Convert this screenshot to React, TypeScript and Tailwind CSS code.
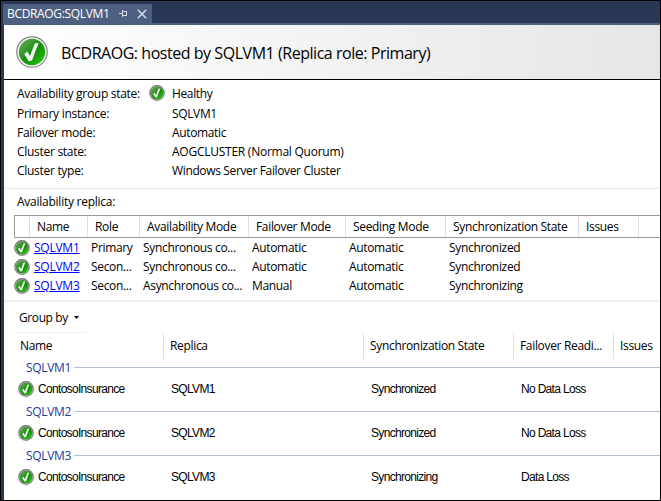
import { clsx } from "clsx";

function Check({ size = 16 }: { size?: number }) {
  const large = size > 20;
  return (
    <svg width={size} height={size} viewBox="0 0 32 32" className="shrink-0">
      <defs>
        <linearGradient id="ring" x1="0" y1="0" x2="0" y2="1">
          <stop offset="0" stopColor="#6c6c6c" />
          <stop offset="1" stopColor="#8c8c8c" />
        </linearGradient>
        <linearGradient id="green" x1="0" y1="0" x2="1" y2="1">
          <stop offset="0" stopColor="#6fb55c" />
          <stop offset="0.35" stopColor="#35972a" />
          <stop offset="0.55" stopColor="#149004" />
          <stop offset="1" stopColor="#2bcf14" />
        </linearGradient>
      </defs>
      <circle cx="16" cy="16" r="15.8" fill="url(#ring)" />
      <circle cx="16" cy="16" r={large ? 14.7 : 13.6} fill={large ? "#f0f0f0" : "#b4b4b4"} />
      <circle cx="16" cy="16" r={large ? 13.2 : 12.6} fill="url(#green)" />
      <path d="M8.3 18 L11.2 15.4 L14 20 L18.8 7.6 L22.6 7 L16 24.6 L12.6 25.2 Z" fill="#f7f7f7" />
    </svg>
  );
}

const details = [
  ["Availability group state:", "Healthy"],
  ["Primary instance:", "SQLVM1"],
  ["Failover mode:", "Automatic"],
  ["Cluster state:", "AOGCLUSTER (Normal Quorum)"],
  ["Cluster type:", "Windows Server Failover Cluster"],
];

const replicaHead = ["Name", "Role", "Availability Mode", "Failover Mode", "Seeding Mode", "Synchronization State", "Issues"];
const replicas = [
  ["SQLVM1", "Primary", "Synchronous co...", "Automatic", "Automatic", "Synchronized"],
  ["SQLVM2", "Secon...", "Synchronous co...", "Automatic", "Automatic", "Synchronized"],
  ["SQLVM3", "Secon...", "Asynchronous co...", "Manual", "Automatic", "Synchronizing"],
];
const replicaCols = "grid grid-cols-[15px_58px_52px_109px_97px_100px_133px_60px_1fr]";

const databases = [
  ["SQLVM1", "Synchronized", "No Data Loss"],
  ["SQLVM2", "Synchronized", "No Data Loss"],
  ["SQLVM3", "Synchronizing", "Data Loss"],
];
const dbCols = "grid grid-cols-[150px_200px_150px_100px_1fr]";

export default function App() {
  return (
    <div className="flex h-[501px] w-[661px] flex-col overflow-hidden whitespace-nowrap border border-black bg-[#293955] pl-[3px] font-['Open_Sans','Noto_Sans',sans-serif] text-[12px] leading-[19px] tracking-[-0.33px] text-black">
      <div className="-ml-px flex h-6 shrink-0 items-end border-b-2 border-[#4d6082]">
        <div className="flex h-[19px] w-[149px] items-center bg-[#4d6082] pl-1 text-white">
          <span className="w-[112px] tracking-[-0.34px]">BCDRAOG:SQLVM1</span>
          <svg width="9" height="8" viewBox="0 0 9 8" fill="none" stroke="#d5dbe6" shapeRendering="crispEdges">
            <path d="M0 3.5H3M3.5 0V7M3 1.5H7.5V5.5M3 5H8" />
          </svg>
          <svg className="ml-[9px]" width="10" height="10" viewBox="0 0 10 10" stroke="#d5dbe6" strokeWidth="1.5">
            <path d="M.8.8L9.2 9.2M9.2.8L.8 9.2" />
          </svg>
        </div>
      </div>

      <header className="flex h-[55px] shrink-0 items-center border-b border-black bg-linear-to-r from-white to-[#e6e6e6] pl-3">
        <Check size={32} />
        <h1 className="ml-[13px] pt-[2px] text-[16px] tracking-[-0.46px]">BCDRAOG: hosted by SQLVM1 (Replica role: Primary)</h1>
      </header>

      <main className="flex min-h-0 flex-1 flex-col bg-white">
        <dl className="h-[109px] shrink-0 border-b border-[#ebebeb] pl-[13px] pt-[2px]">
          {details.map(([label, value], i) => (
            <div key={label} className={clsx("flex items-center", i === 0 ? "h-[22px]" : "h-[19px]")}>
              <dt className="w-[132px] tracking-[-0.29px]">{label}</dt>
              <dd className={clsx("flex items-center", i === 3 ? "tracking-[-0.25px]" : "tracking-[-0.36px]")}>
                <span className="w-[23px]">{i === 0 && <Check />}</span>
                {value}
              </dd>
            </div>
          ))}
        </dl>

        <section className="h-[113px] shrink-0 border-b-2 border-[#ededed] pl-[10px]">
          <h2 className="h-[26px] pl-[3px] pt-[3px] tracking-[-0.25px]">Availability replica:</h2>
          <div className={clsx(replicaCols, "h-[23px] border-y border-l border-[#999999]")}>
            <span className="border-r border-[#dedede]" />
            {replicaHead.map((name) => (
              <span key={name} className="border-r border-[#dedede] pl-[7px] pt-px">{name}</span>
            ))}
          </div>
          {replicas.map((row) => (
            <div key={row[0]} className={clsx(replicaCols, "h-[19px] pl-px")}>
              <span className="-ml-px flex items-center"><Check /></span>
              {row.map((cell, i) => (
                <span key={i} className={i === 0 ? "pl-1" : "pl-[3px]"}>
                  {i === 0 ? <a className="tracking-[-0.25px] text-[#0000ff] underline">{cell}</a> : cell}
                </span>
              ))}
            </div>
          ))}
        </section>

        <section className="flex-1 pl-[10px]">
          <div className="flex h-[31px] w-[72px] items-center border-b border-[#edf2fa] pl-[5px]">
            <span className="w-[55px] tracking-[-0.4px]">Group by</span>
            <svg width="5" height="3" viewBox="0 0 5 3"><path d="M0 0H5L2.5 3Z" /></svg>
          </div>
          <div className={clsx(dbCols, "h-[24px] leading-[26px]")}>
            <span className="border-r border-[#dedede] pl-[6px]">Name</span>
            <span className="border-r border-[#dedede] pl-[6px]">Replica</span>
            <span className="border-r border-[#dedede] pl-[6px]">Synchronization State</span>
            <span className="border-r border-[#dedede] pl-[6px]">Failover Readi...</span>
            <span className="pl-[6px]">Issues</span>
          </div>
          {databases.map(([replica, state, readiness]) => (
            <div key={replica} className="h-11">
              <div className="flex h-[21px] items-center pl-3 text-[#1e3a9c]">
                <span className="w-12">{replica}</span>
                <span className="-mt-px h-px flex-1 bg-[#b0bce0]" />
              </div>
              <div className={clsx(dbCols, "h-[21px] items-center font-['Liberation_Sans',Arial,sans-serif] tracking-[-0.68px]")}>
                <span className="flex items-center pl-1"><Check /><span className="ml-1 pt-px">ContosoInsurance</span></span>
                <span className="pl-[7px] pt-px">{replica}</span>
                <span className="pl-[7px] pt-px">{state}</span>
                <span className="pl-[7px] pt-px">{readiness}</span>
              </div>
            </div>
          ))}
        </section>
      </main>
    </div>
  );
}
